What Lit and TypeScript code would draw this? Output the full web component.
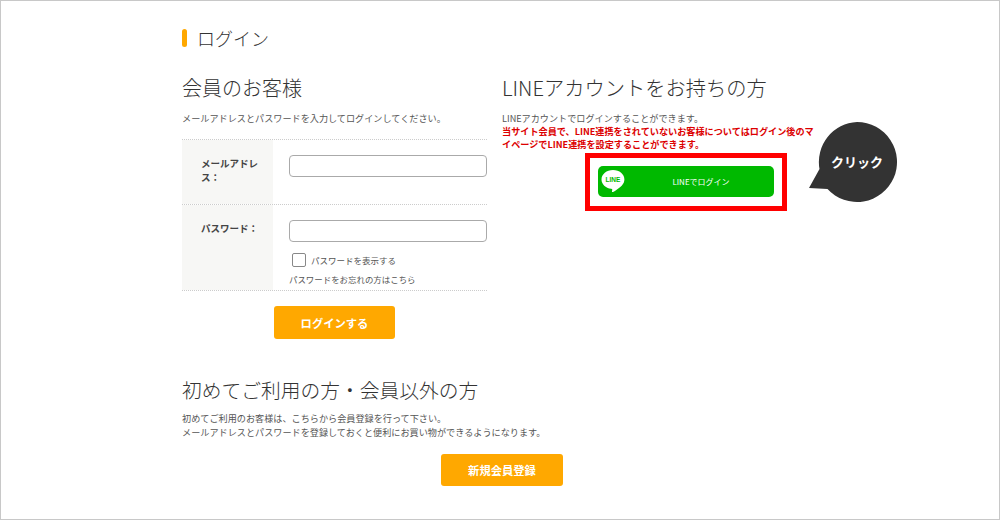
import { LitElement, html, css } from "lit";
import { customElement } from "lit/decorators.js";

@customElement("app-root")
export class AppRoot extends LitElement {
  static styles = css`
    :host {
      display: block;
      width: 1000px;
      height: 520px;
      box-sizing: border-box;
      border: 1px solid #c8c8c8;
      background: #fff;
      color: #444;
      font-family: "Noto Sans CJK JP", "Noto Sans", sans-serif;
      font-size: 9.15px;
      overflow: hidden;
    }
    .page { padding: 28px 0 0 181px; width: 660px; }
    .title {
      display: flex; align-items: center; gap: 10px;
      height: 18px; margin: 0 0 31px;
      font-size: 18px; font-weight: 300; line-height: 18px; color: #333;
    }
    .title::before { content: ""; width: 5px; height: 18px; border-radius: 3px; background: #ffa800; }
    h2 { margin: 0; font-size: 20px; font-weight: 300; line-height: 20px; color: #333; }
    .line-head { font-size: 20.25px; }
    .first-head { font-size: 19.75px; }
    p { margin: 0; }
    .cols { display: grid; grid-template-columns: 305px 318px; column-gap: 15px; }
    .lead { margin-top: 14px; line-height: 13px; color: #555; }
    .table { margin-top: 14px; border-top: 1px dotted #ccc; border-bottom: 1px dotted #ccc; }
    .row { display: grid; grid-template-columns: 91px 1fr; }
    .row + .row { border-top: 1px dotted #ccc; }
    .row.r1 { height: 64px; }
    .row.r2 { height: 85px; }
    .th { background: #f7f7f5; padding: 16px 12px 0 19px; font-size: 9.5px; font-weight: 700; line-height: 14px; color: #444; }
    .td { padding: 15px 0 0 16px; }
    .input { display: block; box-sizing: border-box; width: 198px; height: 22px; border: 1px solid #aaa; border-radius: 4px; background: #fff; padding: 0; }
    .check { display: flex; align-items: center; gap: 5px; margin: 11px 0 0 3px; height: 14px; color: #555; font-size: 8.5px; }
    .box { box-sizing: border-box; width: 14px; height: 14px; border: 1px solid #888; border-radius: 2px; background: #fff; }
    .forgot { margin-top: 6px; line-height: 13px; color: #555; font-size: 8.45px; }
    .btn {
      display: flex; align-items: center; justify-content: center;
      box-sizing: border-box; width: 122px; height: 33px; border-radius: 3px;
      background: #ffa800; color: #fff; font-size: 11.3px; font-weight: 700;
    }
    .login { margin: 15px 0 0 92px; width: 121px; }
    .line-note { margin-top: 14px; line-height: 13px; color: #555; }
    .red { color: #dc0000; font-weight: 700; }
    .line-wrap { position: relative; width: 176px; height: 31px; margin: 15px 0 0 96px; }
    .line-btn {
      position: relative; display: flex; align-items: center; height: 31px; border-radius: 5px;
      background: #00b900; color: #fff; font-size: 8px;
    }
    .line-btn svg { position: absolute; left: 3px; top: 3px; }
    .line-btn span { width: 100%; text-align: center; padding-left: 30px; box-sizing: border-box; }
    .frame { position: absolute; left: -13px; top: -13px; width: 202px; height: 58px; box-sizing: border-box; border: 5px solid #ff0000; pointer-events: none; }
    .bubble { position: absolute; left: 210px; top: -44px; width: 90px; height: 90px; }
    .bubble-text { position: absolute; left: 219px; top: -13px; width: 80px; text-align: center; color: #fff; font-size: 13px; font-weight: 700; line-height: 18px; }
    .first { margin-top: 41px; }
    .first .lead { margin-top: 11px; line-height: 14px; }
    .reg { margin: 15px 0 0 259px; height: 32px; }
  `;

  render() {
    return html`
      <div class="page">
        <h1 class="title">ログイン</h1>
        <div class="cols">
          <section>
            <h2>会員のお客様</h2>
            <p class="lead">メールアドレスとパスワードを入力してログインしてください。</p>
            <div class="table">
              <div class="row r1">
                <div class="th">メールアドレス：</div>
                <div class="td"><div class="input"></div></div>
              </div>
              <div class="row r2">
                <div class="th">パスワード：</div>
                <div class="td">
                  <div class="input"></div>
                  <div class="check"><span class="box"></span><span>パスワードを表示する</span></div>
                  <p class="forgot">パスワードをお忘れの方はこちら</p>
                </div>
              </div>
            </div>
            <div class="btn login">ログインする</div>
          </section>
          <section>
            <h2 class="line-head">LINEアカウントをお持ちの方</h2>
            <p class="line-note">LINEアカウントでログインすることができます。<br /><span class="red">当サイト会員で、LINE連携をされていないお客様についてはログイン後のマイページでLINE連携を設定することができます。</span></p>
            <div class="line-wrap">
              <div class="line-btn">
                <svg width="24" height="25" viewBox="0 0 24 25">
                  <path fill="#fff" d="M12 1C5.6 1 .5 5.2.5 10.400c0 4.700 4.100 8.600 9.700 9.300.4.100.9.300 1 .6.100.3.100.7 0 1l-.2 1c0 .3-.2 1.100 1 .6s6.500-3.800 8.900-6.500c1.600-1.800 2.500-3.800 2.500-6C23.500 5.200 18.400 1 12 1z"/>
                  <text x="12" y="12.700" text-anchor="middle" font-size="6.500" font-weight="700" fill="#00b900" font-family="Liberation Sans, sans-serif">LINE</text>
                </svg>
                <span>LINEでログイン</span>
              </div>
              <div class="frame"></div>
              <svg class="bubble" viewBox="0 0 90 90"><path fill="#333" d="M49 0a40 40 0 1 1-29.500 67L1 66 11.500 47A40 40 0 0 1 49 0z"/></svg>
              <div class="bubble-text">クリック</div>
            </div>
          </section>
        </div>
        <section class="first">
          <h2 class="first-head">初めてご利用の方・会員以外の方</h2>
          <p class="lead">初めてご利用のお客様は、こちらから会員登録を行って下さい。<br />メールアドレスとパスワードを登録しておくと便利にお買い物ができるようになります。</p>
          <div class="btn reg">新規会員登録</div>
        </section>
      </div>
    `;
  }
}
